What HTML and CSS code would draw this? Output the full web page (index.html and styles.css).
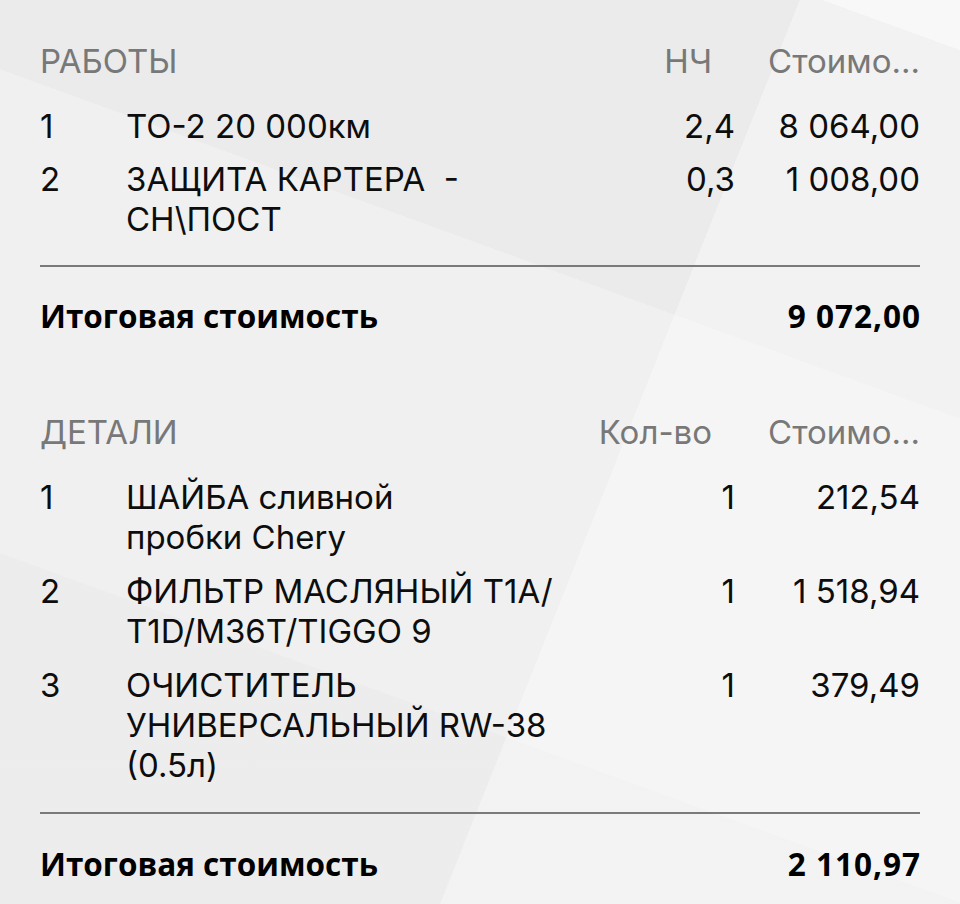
FILE: index.html
```html
<!DOCTYPE html>
<html lang="ru">
<head>
<meta charset="utf-8">
<title>Заказ-наряд</title>
<link rel="stylesheet" href="styles.css">
</head>
<body>
<main class="sheet">
  <section class="block">
    <div class="grid head">
      <span class="c-title">РАБОТЫ</span>
      <span class="c-qty">НЧ</span>
      <span class="c-cost">Стоимо...</span>
    </div>
    <div class="rows">
      <div class="grid row">
        <span class="c-num">1</span>
        <span class="c-name">ТО-2 20 000км</span>
        <span class="c-qty">2,4</span>
        <span class="c-cost">8 064,00</span>
      </div>
      <div class="grid row">
        <span class="c-num">2</span>
        <span class="c-name">ЗАЩИТА КАРТЕРА&nbsp; -<br>CH\ПОСТ</span>
        <span class="c-qty">0,3</span>
        <span class="c-cost">1 008,00</span>
      </div>
    </div>
    <div class="rule"></div>
    <div class="total">
      <span>Итоговая стоимость</span>
      <span class="total-sum">9 072,00</span>
    </div>
  </section>

  <section class="block block-parts">
    <div class="grid head">
      <span class="c-title">ДЕТАЛИ</span>
      <span class="c-qty">Кол-во</span>
      <span class="c-cost">Стоимо...</span>
    </div>
    <div class="rows rows-parts">
      <div class="grid row">
        <span class="c-num">1</span>
        <span class="c-name">ШАЙБА сливной<br>пробки Chery</span>
        <span class="c-qty">1</span>
        <span class="c-cost">212,54</span>
      </div>
      <div class="grid row">
        <span class="c-num">2</span>
        <span class="c-name">ФИЛЬТР МАСЛЯНЫЙ T1A/<br>T1D/M36T/TIGGO 9</span>
        <span class="c-qty">1</span>
        <span class="c-cost">1 518,94</span>
      </div>
      <div class="grid row">
        <span class="c-num">3</span>
        <span class="c-name">ОЧИСТИТЕЛЬ<br>УНИВЕРСАЛЬНЫЙ RW-38<br>(0.5л)</span>
        <span class="c-qty">1</span>
        <span class="c-cost">379,49</span>
      </div>
    </div>
    <div class="rule"></div>
    <div class="total">
      <span>Итоговая стоимость</span>
      <span class="total-sum">2 110,97</span>
    </div>
  </section>
</main>
</body>
</html>
```

FILE: styles.css
```css
html, body {
  margin: 0;
  padding: 0;
}

body {
  min-height: 904px;
  background-color: #ebebeb;
  background-image:
    linear-gradient(111.7deg, rgba(255,255,255,0) 60.6%, rgba(255,255,255,0.35) 60.6%),
    linear-gradient(200deg, rgba(255,255,255,0.5) 4%, rgba(255,255,255,0) 4%, rgba(255,255,255,0) 33.4%, rgba(255,255,255,0.25) 33.4%, rgba(255,255,255,0.25) 72%, rgba(255,255,255,0.08) 72%);
  font-family: "Inter", "Liberation Sans", sans-serif;
  color: #0d0d0d;
}

.sheet {
  padding: 41px 40px 0 40px;
}

.grid {
  display: grid;
  grid-template-columns: 86px 1fr 150px 185px;
  font-size: 33px;
  line-height: 40px;
}

.head {
  color: #787878;
  margin-bottom: 25px;
}

.c-title {
  grid-column: 1 / 3;
}

.head .c-qty {
  padding-right: 23px;
}

.c-qty,
.c-cost {
  text-align: right;
  white-space: nowrap;
}

.rows {
  display: flex;
  flex-direction: column;
  gap: 13px;
}

.rows-parts {
  gap: 14px;
}

.rule {
  height: 2px;
  background: #7a7a7a;
  margin-top: 26px;
}

.total {
  display: flex;
  justify-content: space-between;
  margin-top: 29px;
  font-family: "Open Sans", "Liberation Sans", sans-serif;
  font-weight: 700;
  font-size: 31.5px;
  line-height: 40px;
  color: #000;
}

.total-sum {
  letter-spacing: 1px;
  margin-right: -1px;
}

.block-parts {
  margin-top: 76px;
}

.block-parts .rule {
  margin-top: 27px;
}

.block-parts .total {
  margin-top: 30px;
}
```
